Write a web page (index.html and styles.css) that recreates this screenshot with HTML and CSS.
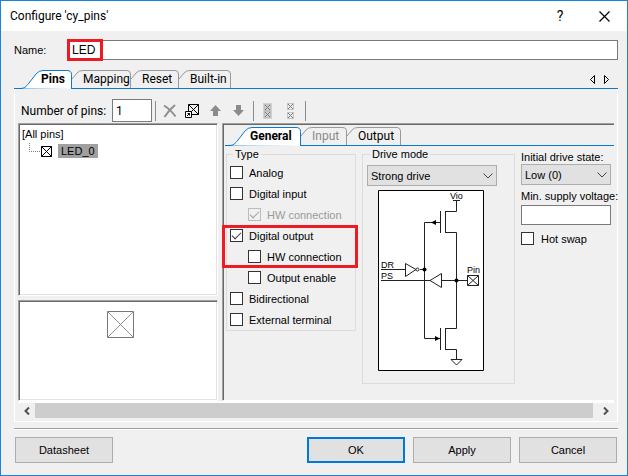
FILE: index.html
```html
<!DOCTYPE html>
<html lang="en">
<head>
<meta charset="utf-8">
<meta name="viewport" content="width=device-width, initial-scale=1">
<title>Configure 'cy_pins'</title>
<link rel="stylesheet" href="styles.css">
</head>
<body>
<main class="dialog">
  <header class="titlebar">
    <h1 class="title">Configure 'cy_pins'</h1>
    <button class="title-btn" type="button" aria-label="Help">?</button>
    <button class="title-btn" type="button" aria-label="Close">
      <svg width="11" height="11" viewBox="0 0 11 11"><path d="M.5.5l10 10M10.5.5l-10 10" fill="none" stroke="#000" stroke-width="1.2"/></svg>
    </button>
  </header>

  <div class="body">
    <div class="name-row">
      <label for="name">Name:</label>
      <div class="name-field">
        <input class="text-input" id="name" type="text" value="LED">
        <span class="mark mark-name"></span>
      </div>
    </div>

    <nav class="tabs tabs-main">
      <button class="tab tab-active tab-pins" type="button">
        <svg class="tab-shape" viewBox="0 0 52 19"><path d="M0 18.5C4 18.5 6 17 9 13L16 4Q19 .5 23 .5H47Q51.5.5 51.5 4.500V19"/></svg><span>Pins</span>
      </button>
      <button class="tab tab-mapping" type="button">
        <svg class="tab-shape" viewBox="0 0 59 19"><path d="M0 9L5 3Q7 .5 11 .5H55Q58.500.5 58.500 4V18"/></svg><span>Mapping</span>
      </button>
      <button class="tab tab-reset" type="button">
        <svg class="tab-shape" viewBox="0 0 48 19"><path d="M0 9L5 3Q7 .5 11 .5H44Q47.500.5 47.500 4V18"/></svg><span>Reset</span>
      </button>
      <button class="tab tab-builtin" type="button">
        <svg class="tab-shape" viewBox="0 0 52 19"><path d="M0 9L5 3Q7 .5 11 .5H48Q51.500.5 51.500 4V18"/></svg><span>Built-in</span>
      </button>
      <span class="tab-scroll">
        <button type="button" aria-label="Previous tab"><svg width="5" height="9" viewBox="0 0 5 9"><path d="M4.500.5v8L.5 4.500z" fill="none" stroke="#000"/></svg></button>
        <button type="button" aria-label="Next tab"><svg width="5" height="9" viewBox="0 0 5 9"><path d="M.5.5v8L4.500 4.500z" fill="none" stroke="#000"/></svg></button>
      </span>
    </nav>

    <section class="panel">
      <div class="toolbar">
        <label for="count">Number of pins:</label>
        <input class="text-input count" id="count" type="text" value="1">
        <span class="divider"></span>
        <button class="tool" type="button" aria-label="Delete">
          <svg width="14" height="14" viewBox="0 0 14 14"><path d="M1 1.500Q7 5 12.500 12.500M12 1Q6 6 1.500 13" fill="none" stroke="#8f8f8f" stroke-width="2"/></svg>
        </button>
        <button class="tool" type="button" aria-label="Add pin">
          <svg width="15" height="14" viewBox="0 0 15 14"><path d="M3.500.5h10v10h-10zM3.500.5l10 10M13.500.5l-10 10" fill="none" stroke="#000"/><path d="M.5 7.500h6v6h-6z" fill="#fff" stroke="#000"/><path d="M2 12l2.500-2.500M2.500 9.500h2v2" fill="none" stroke="#000"/></svg>
        </button>
        <button class="tool" type="button" aria-label="Move up">
          <svg width="11" height="12" viewBox="0 0 11 12"><path d="M5.500 0L11 6H8v5H3V6H0z" fill="#8b8b8b"/></svg>
        </button>
        <button class="tool" type="button" aria-label="Move down">
          <svg width="11" height="12" viewBox="0 0 11 12"><path d="M5.500 11L11 5H8V0H3v5H0z" fill="#8b8b8b"/></svg>
        </button>
        <span class="divider"></span>
        <button class="tool" type="button" aria-label="Group pins">
          <svg width="9" height="16" viewBox="0 0 9 16"><path d="M0 0h9v16H0z" fill="#d2d2d2"/><path d="M2 2l5 5M7 2L2 7M2 9l5 5M7 9l-5 5" stroke="#777"/><path d="M1.500 1.500h6v6h-6zM1.500 8.500h6v6h-6z" fill="none" stroke="#aaa" stroke-dasharray="1 1"/></svg>
        </button>
        <button class="tool" type="button" aria-label="Ungroup pins">
          <svg width="7" height="16" viewBox="0 0 7 16"><path d="M1 1l5 5M6 1L1 6M1 10l5 5M6 10l-5 5" stroke="#777"/><path d="M.5.5h6v6h-6zM.5 9.500h6v6h-6z" fill="none" stroke="#999" stroke-dasharray="1 1"/></svg>
        </button>
        <span class="divider"></span>
      </div>

      <div class="split">
        <div class="side">
          <div class="sunken tree">
            <div>[All pins]</div>
            <div class="tree-item">
              <svg width="11" height="16" viewBox="0 0 11 16"><path d="M.5 0v8.500H11" fill="none" stroke="#808080" stroke-dasharray="1 1"/></svg>
              <svg width="11" height="11" viewBox="0 0 11 11"><path d="M.5.5h10v10H.5zM.5.5l10 10M10.500.5l-10 10" fill="none" stroke="#000"/></svg>
              <span class="tree-name">LED_0</span>
            </div>
          </div>
          <div class="sunken preview">
            <svg width="27" height="27" viewBox="0 0 27 27"><path d="M.5.5h26v26H.5z" fill="none" stroke="#777"/><path d="M1 1l25 25M26 1L1 26" stroke="#777" stroke-width=".8"/></svg>
          </div>
        </div>

        <div class="details">
          <nav class="tabs tabs-inner">
            <button class="tab tab-active tab-general" type="button">
              <svg class="tab-shape" viewBox="0 0 72 19"><path d="M0 18.500C4 18.500 6 17 9 13L16 4Q19 .5 23 .5H67Q71.500.5 71.500 4.500V19"/></svg><span>General</span>
            </button>
            <button class="tab tab-input" type="button" disabled>
              <svg class="tab-shape" viewBox="0 0 46 19"><path d="M0 9L5 3Q7 .5 11 .5H42Q45.500.5 45.500 4V18"/></svg><span>Input</span>
            </button>
            <button class="tab tab-output" type="button">
              <svg class="tab-shape" viewBox="0 0 54 19"><path d="M0 9L5 3Q7 .5 11 .5H50Q53.500.5 53.500 4V18"/></svg><span>Output</span>
            </button>
          </nav>

          <div class="settings">
            <fieldset class="group group-type">
              <legend>Type</legend>
              <label class="check"><input type="checkbox">Analog</label>
              <label class="check"><input type="checkbox">Digital input</label>
              <label class="check check-sub check-off"><input type="checkbox" checked disabled>HW connection</label>
              <label class="check"><input type="checkbox" checked>Digital output</label>
              <label class="check check-sub"><input type="checkbox">HW connection</label>
              <label class="check check-sub"><input type="checkbox">Output enable</label>
              <label class="check"><input type="checkbox">Bidirectional</label>
              <label class="check"><input type="checkbox">External terminal</label>
              <span class="mark mark-output"></span>
            </fieldset>

            <fieldset class="group group-drive">
              <legend>Drive mode</legend>
              <div class="combo">
                <select aria-label="Drive mode"><option>Strong drive</option></select>
                <svg width="10" height="6" viewBox="0 0 10 6"><path d="M.5.5L5 5 9.500.5" fill="none" stroke="#444"/></svg>
              </div>
              <svg class="circuit" width="106" height="181" viewBox="378 190 106 181" role="img" aria-label="Strong drive circuit">
                <path d="M378.500 190.500h105v180h-105z" fill="#fff" stroke="#000"/>
                <g fill="none" stroke="#222">
                  <path d="M453 200.500h7M456.500 200.500v11h-11M445.500 211v22M440.500 211v22M440 222.500h-15.500V338.500H440M445 232.500h11.500V328.500h-11M440.500 328v22M445.500 328v22M445 349.500h11.500v10M451 359.500h11l-5.500 5.500z"/>
                  <path d="M381 269.500h24M420 269.500h4M381 280.500h49M442 280.500h25"/>
                  <path d="M405.500 263.500v13L416 269.500zM441.500 273.500v14L430 280.500z" fill="#fff"/>
                  <circle cx="417.500" cy="269.500" r="1.500" fill="#fff"/>
                  <path d="M467.500 275.500h11v10h-11zM467.500 275.500l11 10M478.500 275.500l-11 10"/>
                </g>
                <path d="M431 222.500l5-2.500v5zM440 338.500l-5-2.500v5z"/>
                <circle cx="424.500" cy="269.500" r="2"/><circle cx="456.500" cy="280.500" r="2"/>
                <g class="circuit-text"><text x="450" y="199">Vio</text><text x="381" y="268">DR</text><text x="381" y="279">PS</text><text x="467" y="273">Pin</text></g>
              </svg>
            </fieldset>

            <div class="extra">
              <label for="state">Initial drive state:</label>
              <div class="combo">
                <select id="state"><option>Low (0)</option></select>
                <svg width="10" height="6" viewBox="0 0 10 6"><path d="M.5.5L5 5 9.500.5" fill="none" stroke="#444"/></svg>
              </div>
              <label class="voltage-label" for="voltage">Min. supply voltage:</label>
              <input class="text-input" id="voltage" type="text">
              <label class="check"><input type="checkbox">Hot swap</label>
            </div>
          </div>
        </div>
      </div>

      <div class="scrollbar">
        <button type="button" aria-label="Scroll left"><svg width="6" height="8" viewBox="0 0 6 8"><path d="M5 .5L1.500 4 5 7.500" fill="none" stroke="#505050" stroke-width="2"/></svg></button>
        <span class="thumb"></span>
        <button type="button" aria-label="Scroll right"><svg width="6" height="8" viewBox="0 0 6 8"><path d="M1 .5L4.500 4 1 7.500" fill="none" stroke="#505050" stroke-width="2"/></svg></button>
      </div>
    </section>

    <footer class="actions">
      <button class="btn btn-first" type="button">Datasheet</button>
      <button class="btn btn-default" type="button">OK</button>
      <button class="btn" type="button">Apply</button>
      <button class="btn" type="button">Cancel</button>
    </footer>
  </div>
</main>
</body>
</html>
```

FILE: styles.css
```css
* { box-sizing: border-box; }

body {
  margin: 0;
  background: #f0f0f0;
  color: #000;
  font: 11px/14px "Liberation Sans", Arial, sans-serif;
}

button, input, select {
  margin: 0;
  padding: 0;
  color: inherit;
  font: inherit;
}

svg { display: block; flex: none; }

.dialog {
  display: flex;
  flex-direction: column;
  min-height: 100vh;
  border: 1px solid #1883d7;
}

.titlebar {
  display: flex;
  align-items: center;
  height: 30px;
  padding: 0 12px 0 9px;
  background: #fff;
  font: 12px/16px Roboto, "Open Sans", sans-serif;
}

.title { flex: 1; margin: 0; font: inherit; }

.title-btn {
  display: flex;
  align-items: center;
  justify-content: center;
  width: 22px;
  height: 22px;
  border: 0;
  background: none;
  font-size: 14px;
}

.title-btn + .title-btn { margin-left: 22px; }

.body {
  display: flex;
  flex: 1;
  flex-direction: column;
  padding: 9px 9px 0 13px;
}

.name-row { display: flex; align-items: center; }
.name-row label { width: 53px; }
.name-field { position: relative; flex: 1; display: flex; }

.text-input {
  width: 100%;
  height: 20px;
  padding: 0 4px;
  border: 1px solid #7a7a7a;
  border-radius: 0;
  background: #fff;
}

.name-field .text-input { font: 12px/16px "Liberation Sans", Arial, sans-serif; }

.mark {
  position: absolute;
  border: 3px solid #ed1c24;
  pointer-events: none;
}

.mark-name { left: 0; top: -1px; width: 36px; height: 22px; }
.mark-output { left: -5px; top: 64px; width: 136px; height: 43px; }

/* Tab strips */
.tabs {
  display: flex;
  height: 19px;
  border-bottom: 1px solid #0a78cf;
  font: 12px/18px Roboto, "Open Sans", sans-serif;
}

.tabs-main { margin-top: 10px; padding-left: 6px; }
.tabs-inner { margin-top: 2px; padding-left: 4px; }

.tab {
  position: relative;
  height: 18px;
  border: 0;
  background: none;
  text-align: left;
  padding-left: 11px;
}

.tab span { position: relative; }
.tab:disabled { color: #8a8a8a; }

.tab-shape {
  position: absolute;
  left: 0;
  top: 0;
  width: 100%;
  height: 19px;
  fill: none;
  stroke: #999;
}

.tab-active { padding-left: 21px; font-weight: bold; }
.tab-active .tab-shape { fill: #fff; stroke: #0a78cf; }
.tab-pins { width: 52px; }
.tab-mapping { width: 59px; }
.tab-reset { width: 48px; }
.tab-builtin { width: 52px; }
.tab-general { width: 72px; }
.tab-input { width: 46px; }
.tab-output { width: 54px; }

.tab-scroll {
  display: flex;
  align-items: center;
  gap: 9px;
  margin-left: auto;
  padding-right: 9px;
}

.tab-scroll button { border: 0; background: none; }

/* Main panel */
.panel {
  padding: 9px 3px 3px 3px;
  border: 1px solid #fff;
  border-top: 0;
}

.toolbar {
  display: flex;
  align-items: center;
  height: 25px;
  padding-left: 3px;
}

.toolbar label {
  width: 91px;
  font: 12px/16px Roboto, "Open Sans", sans-serif;
}

.count { width: 40px; height: 23px; padding: 0 3px; font: 12px/16px Roboto, "Open Sans", sans-serif; }

.divider { width: 1px; height: 20px; margin: 0 2px 0 3px; background: #8c8c8c; }

.tool {
  display: flex;
  align-items: center;
  justify-content: center;
  width: 23px;
  height: 23px;
  border: 0;
  background: none;
}

.split { display: flex; gap: 4px; height: 278px; }
.side { display: flex; flex: none; flex-direction: column; gap: 4px; width: 200px; }

.sunken {
  border: 1px solid;
  border-color: #a0a0a0 #fff #fff #a0a0a0;
  box-shadow: inset 1px 1px #696969, inset -1px -1px #e3e3e3;
  background: #fff;
}

.tree { flex: 1; padding: 3px; }
.tree-item { display: flex; align-items: center; margin-top: 2px; padding-left: 7px; gap: 1px; }
.tree-item > svg:first-child { align-self: flex-start; }
.tree-name { margin-left: 5px; padding: 0 3px; background: #a0a0a0; }

.preview { display: flex; justify-content: center; height: 101px; padding: 10px 0 0 5px; }

.details {
  flex: 1;
  min-width: 0;
  padding: 1px 0 0 2px;
  border: solid #a0a0a0;
  border-width: 1px 0 0 1px;
  border-bottom: 1px solid #fff;
  box-shadow: inset 1px 1px #696969;
}

.settings { display: flex; align-items: flex-start; padding: 1px 0 0 1px; }

.group {
  position: relative;
  min-width: 0;
  margin: 0;
  padding: 0 3px;
  border: 1px solid #dcdcdc;
}

.group legend { margin-left: 3px; padding: 0 2px; }
.group-type { flex: none; width: 130px; height: 184px; }
.group-drive { flex: none; width: 153px; height: 237px; margin-left: 6px; padding: 0 4px; }
.group-drive .combo { width: 130px; margin-top: 4px; }
.circuit { margin: 4px 0 0 11px; }
.circuit-text { font: 9px "Liberation Sans", Arial, sans-serif; }

.check { display: flex; align-items: center; gap: 6px; height: 21px; }
.group-type legend + .check { margin-top: 1px; }
.check-sub { padding-left: 18px; }
.check-off { color: #9a9a9a; }

.check input {
  position: relative;
  flex: none;
  width: 13px;
  height: 13px;
  border: 1px solid #333;
  background: #fff;
  appearance: none;
}

.check input:disabled { border-color: #bcbcbc; background: #f0f0f0; color: #9a9a9a; }

.check input:checked::after {
  content: "";
  position: absolute;
  left: 3px;
  top: 1px;
  width: 8px;
  height: 4px;
  border: solid #333;
  border-width: 0 0 1px 1px;
  transform: translate(-2px, 1px) rotate(-45deg);
}

.check input:disabled:checked::after { border-color: #a0a0a0; }

.combo { position: relative; height: 21px; }

.combo select {
  width: 100%;
  height: 21px;
  padding: 0 3px;
  border: 1px solid #adadad;
  border-radius: 0;
  background: #e1e1e1;
  appearance: none;
}

.combo svg { position: absolute; right: 4px; top: 8px; pointer-events: none; }

.extra { flex: 1; min-width: 0; padding: 3px 3px 0 6px; white-space: nowrap; }
.extra > label:first-child { display: block; }
.voltage-label { display: block; margin: 4px 0 2px; }
.extra .check { gap: 7px; margin-top: 3px; }

.scrollbar { display: flex; height: 17px; border-top: 2px solid #fff; }

.scrollbar button {
  display: flex;
  align-items: center;
  justify-content: center;
  width: 17px;
  border: 0;
  background: #f0f0f0;
}

.thumb { flex: 1; margin-right: 4px; background: #cdcdcd; }

.actions {
  display: flex;
  gap: 8px;
  margin-top: 6px;
  padding: 8px 1px 0;
  border-top: 1px solid #a0a0a0;
  box-shadow: inset 0 1px #fff;
}

.btn {
  width: 98px;
  height: 26px;
  border: 1px solid #adadad;
  background: #e1e1e1;
}

.btn-first { margin-right: auto; }
.btn-default { border: 2px solid #0078d7; }
```
